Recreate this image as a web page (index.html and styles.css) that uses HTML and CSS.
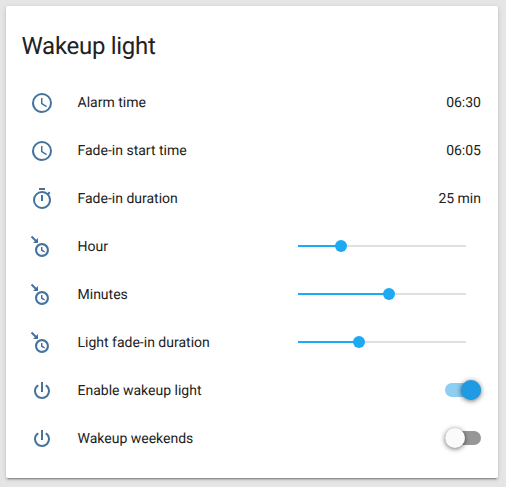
FILE: index.html
```html
<!DOCTYPE html>
<html lang="en">

<head>
    <meta charset="UTF-8">
    <meta name="viewport" content="width=device-width, initial-scale=1.0">
    <title>Wakeup light</title>
    <link rel="stylesheet" href="styles.css">
</head>

<body>
    <!-- Icon shapes shared by the rows -->
    <svg class="sprite" aria-hidden="true">
        <symbol id="clock" viewBox="0 0 24 24">
            <path d="M12,20A8,8 0 0,0 20,12A8,8 0 0,0 12,4A8,8 0 0,0 4,12A8,8 0 0,0 12,20M12,2A10,10 0 0,1 22,12A10,10 0 0,1 12,22C6.47,22 2,17.5 2,12A10,10 0 0,1 12,2M12.5,7V12.25L17,14.92L16.25,16.15L11,13V7H12.5Z"/>
        </symbol>
        <symbol id="timer" viewBox="0 0 24 24">
            <path d="M12,20A7,7 0 0,1 5,13A7,7 0 0,1 12,6A7,7 0 0,1 19,13A7,7 0 0,1 12,20M19.03,7.39L20.45,5.97C20,5.46 19.55,5 19.04,4.56L17.62,6C16.07,4.74 14.12,4 12,4A9,9 0 0,0 3,13A9,9 0 0,0 12,22C17,22 21,17.97 21,13C21,10.88 20.26,8.93 19.03,7.39M11,14H13V8H11M15,1H9V3H15V1Z"/>
        </symbol>
        <symbol id="clock-in" viewBox="0 0 24 24">
            <path d="M2.21,0.79L0.79,2.21L4.8,6.21L3,8H8V3L6.21,4.8M12,8C8.14,8 5,11.13 5,15A7,7 0 0,0 12,22A7,7 0 0,0 19,15A7,7 0 0,0 12,8M12,10.15C14.67,10.15 16.85,12.32 16.85,15A4.85,4.85 0 0,1 12,19.85C9.32,19.85 7.15,17.67 7.15,15A4.85,4.85 0 0,1 12,10.15M11,12V15.69L14.19,17.53L14.94,16.23L12.5,14.82V12"/>
        </symbol>
        <symbol id="power" viewBox="0 0 24 24">
            <path d="M16.56,5.44L15.11,6.89C16.84,7.94 18,9.83 18,12A6,6 0 0,1 12,18A6,6 0 0,1 6,12C6,9.83 7.16,7.94 8.88,6.88L7.44,5.44C5.36,6.88 4,9.28 4,12A8,8 0 0,0 12,20A8,8 0 0,0 20,12C20,9.28 18.64,6.88 16.56,5.44M13,3H11V13H13"/>
        </symbol>
    </svg>

    <main class="card">
        <h1 class="title">Wakeup light</h1>

        <div class="row">
            <svg class="icon"><use href="#clock"/></svg>
            <span class="name">Alarm time</span>
            <span class="state">06:30</span>
        </div>
        <div class="row">
            <svg class="icon"><use href="#clock"/></svg>
            <span class="name">Fade-in start time</span>
            <span class="state">06:05</span>
        </div>
        <div class="row">
            <svg class="icon"><use href="#timer"/></svg>
            <span class="name">Fade-in duration</span>
            <span class="state">25 min</span>
        </div>

        <!-- Sliders -->
        <div class="row">
            <svg class="icon"><use href="#clock-in"/></svg>
            <span class="name">Hour</span>
            <div class="slider">
                <div class="slider-fill" style="width: 25.6%"></div>
                <div class="slider-knob"></div>
            </div>
        </div>
        <div class="row">
            <svg class="icon"><use href="#clock-in"/></svg>
            <span class="name">Minutes</span>
            <div class="slider">
                <div class="slider-fill" style="width: 54.17%"></div>
                <div class="slider-knob"></div>
            </div>
        </div>
        <div class="row">
            <svg class="icon"><use href="#clock-in"/></svg>
            <span class="name">Light fade-in duration</span>
            <div class="slider">
                <div class="slider-fill" style="width: 36.31%"></div>
                <div class="slider-knob"></div>
            </div>
        </div>

        <!-- Toggles -->
        <div class="row">
            <svg class="icon"><use href="#power"/></svg>
            <span class="name">Enable wakeup light</span>
            <div class="toggle on" role="switch" aria-checked="true" aria-label="Enable wakeup light">
                <div class="toggle-knob"></div>
            </div>
        </div>
        <div class="row">
            <svg class="icon"><use href="#power"/></svg>
            <span class="name">Wakeup weekends</span>
            <div class="toggle" role="switch" aria-checked="false" aria-label="Wakeup weekends">
                <div class="toggle-knob"></div>
            </div>
        </div>
    </main>
</body>

</html>
```
FILE: styles.css
```css
body {
    margin: 0;
    padding: 6px 8px 9px 6px;
    background: #e5e5e5;
    color: #212121;
    font-family: Roboto, "Liberation Sans", sans-serif;
    font-size: 14px;
    text-rendering: geometricPrecision;
}

.sprite {
    display: none;
}

.card {
    box-sizing: border-box;
    height: 472px;
    padding: 24px 17px 16px 16px;
    background: #fff;
    border-radius: 2px;
    box-shadow: 0 2px 2px 0 rgba(0, 0, 0, 0.14),
                0 1px 5px 0 rgba(0, 0, 0, 0.12),
                0 3px 1px -2px rgba(0, 0, 0, 0.2);
}

.title {
    margin: 0 0 20px -0.5px;
    font-size: 24px;
    font-weight: 400;
    line-height: 32px;
    letter-spacing: -0.012em;
}

.row {
    display: flex;
    align-items: center;
    height: 40px;
    margin-bottom: 8px;
}

.icon {
    width: 24px;
    height: 24px;
    margin: 2px 23.5px 0 8px;
    fill: #44739e;
}

.name {
    flex: 1;
    padding-top: 2px;
    line-height: 20px;
}

.state {
    padding-top: 2px;
    line-height: 20px;
}

.slider {
    display: flex;
    align-items: center;
    width: 168px;
    height: 2px;
    margin-right: 15px;
    background: #e0e0e0;
}

.slider-fill {
    height: 2px;
    background: #1eaaf1;
}

.slider-knob {
    flex: none;
    width: 12px;
    height: 12px;
    margin-left: -6px;
    border-radius: 50%;
    background: #1eaaf1;
}

.toggle {
    display: flex;
    align-items: center;
    width: 36px;
    height: 14px;
    border-radius: 7px;
    background: #979797;
}

.toggle-knob {
    width: 20px;
    height: 20px;
    border-radius: 50%;
    background: #fafafa;
    box-shadow: 0 1px 5px 0 rgba(0, 0, 0, 0.6);
}

.toggle.on {
    justify-content: flex-end;
    background: #8dcef2;
}

.toggle.on .toggle-knob {
    background: #1e9be2;
}
```
